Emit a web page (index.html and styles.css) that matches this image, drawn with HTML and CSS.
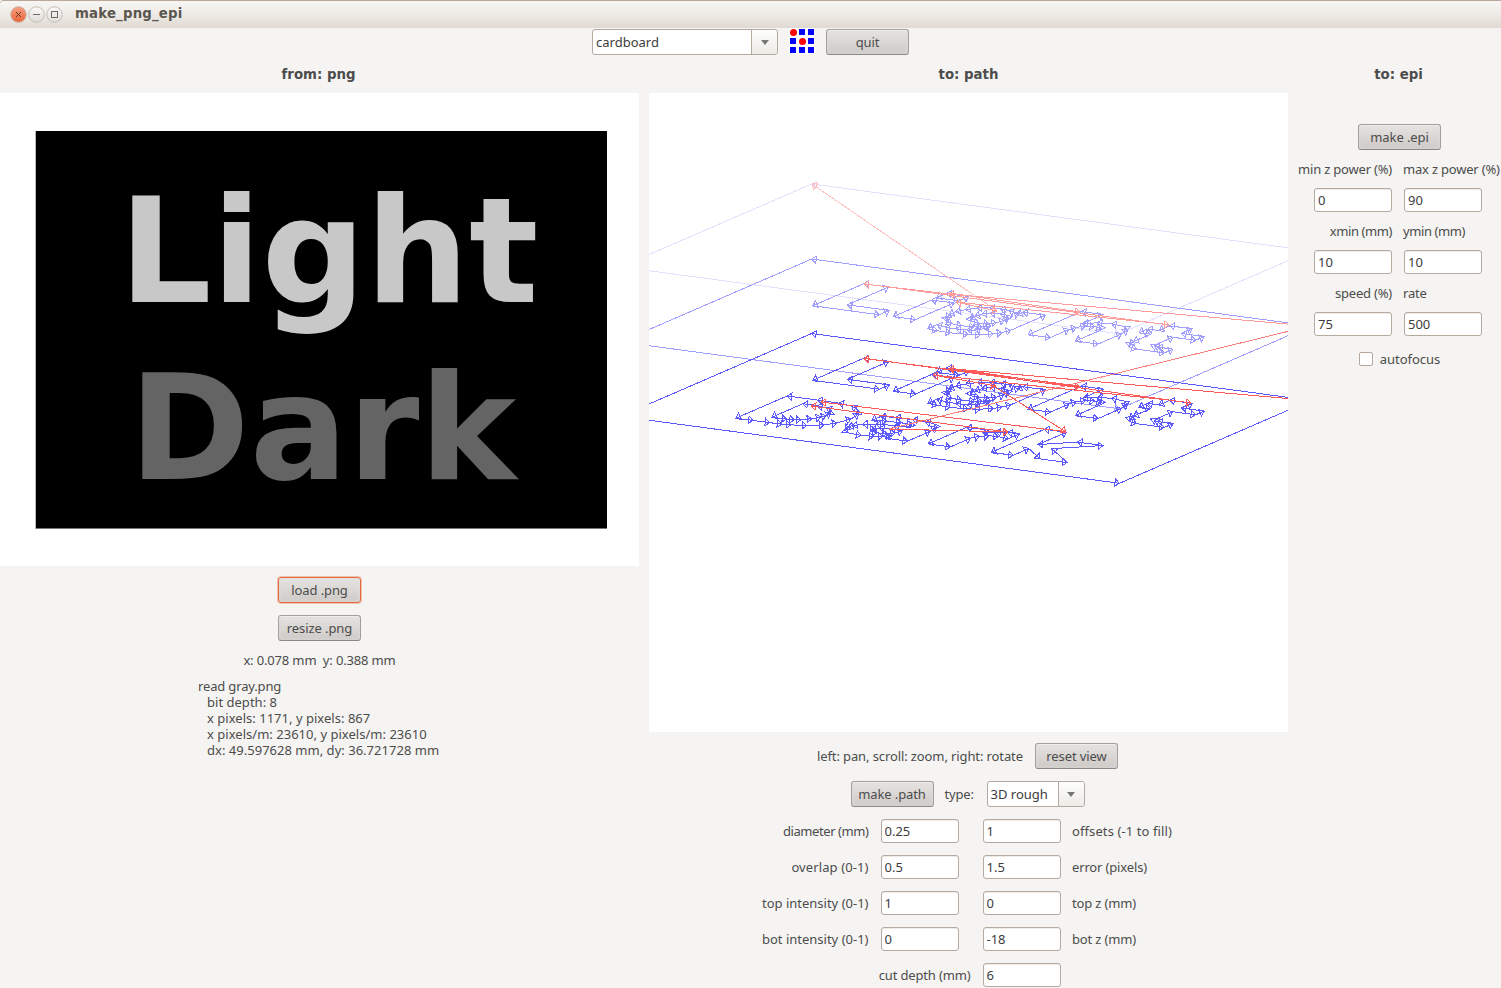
FILE: index.html
```html
<!DOCTYPE html>
<html lang="en">
<head>
<meta charset="utf-8">
<title>make_png_epi</title>
<link rel="stylesheet" href="styles.css">
</head>
<body>
<header class="titlebar">
  <svg class="winbtns" width="56" height="20" viewBox="0 0 56 20">
    <defs>
      <linearGradient id="close" x1="0" y1="0" x2="0" y2="1"><stop offset="0" stop-color="#f6a285"/><stop offset="1" stop-color="#ea6336"/></linearGradient>
      <linearGradient id="plain" x1="0" y1="0" x2="0" y2="1"><stop offset="0" stop-color="#fbfaf9"/><stop offset="1" stop-color="#dfdcd8"/></linearGradient>
    </defs>
    <circle cx="10.5" cy="10.5" r="7.7" fill="url(#close)" stroke="#c9a79a"/>
    <circle cx="28.5" cy="10.5" r="7.7" fill="url(#plain)" stroke="#c2bdb6"/>
    <circle cx="46.5" cy="10.5" r="7.7" fill="url(#plain)" stroke="#c2bdb6"/>
    <path d="M8 8l5 5M13 8l-5 5" stroke="#6b3a28" fill="none"/>
    <path d="M25 10.5h7" stroke="#6d6a64" fill="none"/>
    <rect x="43.5" y="7.5" width="6" height="6" stroke="#6d6a64" fill="none"/>
  </svg>
  <span class="title">make_png_epi</span>
</header>
<div class="toolbar">
  <div class="combo wide"><span class="combo-text">cardboard</span><span class="combo-arrow"><i></i></span></div>
  <svg class="logo" width="26" height="26" viewBox="0 0 26 26">
    <rect width="26" height="26" fill="#fff"/>
    <g fill="#00f"><rect x="10" y="1" width="6" height="6"/><rect x="19" y="1" width="6" height="6"/><rect x="1" y="10" width="6" height="6"/><rect x="19" y="10" width="6" height="6"/><rect x="1" y="19" width="6" height="6"/><rect x="10" y="19" width="6" height="6"/><rect x="19" y="19" width="6" height="6"/></g>
    <g fill="#f00"><circle cx="4.5" cy="4.5" r="3.5"/><circle cx="13.5" cy="13.5" r="3.5"/></g>
  </svg>
  <button class="btn">quit</button>
</div>
<main class="columns">
  <section class="col">
    <h2 class="head from">from: png</h2>
    <svg class="view" width="639" height="473" viewBox="0 93 639 473">
      <rect x="35.5" y="131" width="571.500" height="398" fill="#777"/>
      <rect x="36" y="131" width="571" height="397" fill="#000"/>
      <text class="pic" x="119" y="302" fill="#c8c8c8">Light</text>
      <text class="pic" x="129" y="478.500" fill="#646464">Dark</text>
    </svg>
    <button class="btn focus">load .png</button>
    <button class="btn second">resize .png</button>
    <div class="size">x: 0.078 mm&nbsp; y: 0.388 mm</div>
    <div class="info">
      <div>read gray.png</div>
      <div class="sub">bit depth: 8</div>
      <div class="sub">x pixels: 1171, y pixels: 867</div>
      <div class="sub">x pixels/m: 23610, y pixels/m: 23610</div>
      <div class="sub">dx: 49.597628 mm, dy: 36.721728 mm</div>
    </div>
  </section>
  <section class="col">
    <h2 class="head">to: path</h2>
    <svg class="view" id="path" width="639" height="639" viewBox="649 93 639 639" shape-rendering="crispEdges"></svg>
    <div class="controls">
      <div class="row view-row"><span class="hint">left: pan, scroll: zoom, right: rotate</span><button class="btn">reset view</button></div>
      <div class="row type-row"><button class="btn">make .path</button><span class="type">type:</span><div class="combo small"><span class="combo-text">3D rough</span><span class="combo-arrow"><i></i></span></div></div>
      <div class="fields">
        <div class="field"><label class="tight">diameter (mm)</label><input value="0.25"><input class="b" value="1"><span class="loose">offsets (-1 to fill)</span></div>
        <div class="field"><label class="loose">overlap (0-1)</label><input value="0.5"><input class="b" value="1.5"><span>error (pixels)</span></div>
        <div class="field"><label class="even">top intensity (0-1)</label><input value="1"><input class="b" value="0"><span>top z (mm)</span></div>
        <div class="field"><label class="even">bot intensity (0-1)</label><input value="0"><input class="b" value="-18"><span>bot z (mm)</span></div>
        <div class="field"><label class="long">cut depth (mm)</label><input value="6"></div>
      </div>
    </div>
  </section>
  <section class="col">
    <h2 class="head epi">to: epi</h2>
    <button class="btn make-epi">make .epi</button>
    <div class="pairs">
      <div class="pair"><label>min z power (%)</label><input value="0"></div>
      <div class="pair"><label>max z power (%)</label><input value="90"></div>
      <div class="pair"><label class="tight">xmin (mm)</label><input value="10"></div>
      <div class="pair"><label class="tight">ymin (mm)</label><input value="10"></div>
      <div class="pair"><label>speed (%)</label><input value="75"></div>
      <div class="pair"><label>rate</label><input value="500"></div>
    </div>
    <div class="check"><i></i><span class="even">autofocus</span></div>
  </section>
</main>
<script src="path.js"></script>
</body>
</html>
```
FILE: styles.css
```css
* { box-sizing: border-box; }
body { margin: 0; width: 1501px; height: 988px; overflow: hidden; background: #f5f4f2; color: #4c4c4c; font: 13px/16px "Noto Sans", sans-serif; letter-spacing: -0.15px; }
.titlebar { height: 28px; display: flex; align-items: flex-start; background: linear-gradient(#f8f6f4, #efece8 45%, #dfd9d1); border-top: 1px solid #b8a89c; padding-left: 8px; border-top-left-radius: 4px; }
.winbtns { margin-top: 3px; }
.title { margin: 4px 0 0 11px; font: bold 13.330px/17px "DejaVu Sans", sans-serif; color: #5b574f; letter-spacing: 0.17px; white-space: nowrap; }
.toolbar { height: 28px; display: flex; justify-content: center; gap: 11px; padding-top: 1px; }
.logo { margin-top: -1px; }
.btn { width: 83px; height: 26px; padding: 0; border: 1px solid #a39f9a; border-bottom-color: #8d8883; border-radius: 3px; background: linear-gradient(#e6e4e2, #cdc9c6); box-shadow: inset 0 1px #efeeec, inset 0 0 5px #dedbd8; color: #4c4c4c; font: inherit; letter-spacing: -0.1px; white-space: nowrap; }
.btn.focus { border-color: #e2693d; box-shadow: 0 0 0 1px #f3c2ae, inset 0 0 5px #e2dfdc; }
.combo { display: flex; height: 26px; border: 1px solid #b5aa9f; border-radius: 3px; background: #fff; color: #3c3c3c; }
.wide { width: 186px; }
.small { width: 98px; margin-left: 12px; }
.combo-text { flex: 1; padding: 4px 0 0 3px; white-space: nowrap; letter-spacing: 0; }
.combo-arrow { width: 26px; border-left: 1px solid #b5aa9f; background: linear-gradient(#fdfdfc, #edebe8); display: flex; align-items: center; justify-content: center; border-radius: 0 3px 3px 0; }
.combo-arrow i { border: 4px solid transparent; border-top: 5px solid #777; border-bottom: 0; }
.columns { display: grid; grid-template-columns: 639px 639px 203px; column-gap: 10px; }
.col { display: flex; flex-direction: column; align-items: center; }
.head { margin: 0; height: 37px; padding-top: 10px; font: bold 13.330px/18px "DejaVu Sans", sans-serif; letter-spacing: 0; }
.from, .epi { position: relative; left: -1px; }
.view { display: block; background: #fff; margin-bottom: 11px; flex: none; }
.pic { font: bold 145.400px "DejaVu Sans", sans-serif; letter-spacing: 0; }
.second { margin-top: 12px; }
.size { margin-top: 11px; white-space: nowrap; }
.info { width: 243px; margin-top: 10px; white-space: nowrap; }
.sub { padding-left: 9px; letter-spacing: 0.02px; }
.controls { display: flex; flex-direction: column; align-items: center; margin-right: 2px; }
.row { display: flex; align-items: center; height: 26px; white-space: nowrap; }
.hint { width: 206px; margin-right: 12px; letter-spacing: -0.11px; }
.type-row { margin-top: 12px; }
.type { width: 30px; margin-left: 11px; }
.fields { width: 412px; margin-top: 12px; display: flex; flex-direction: column; gap: 12px; }
.field { display: flex; align-items: center; height: 24px; white-space: nowrap; }
.field label { width: 107px; margin-right: 12px; display: flex; justify-content: flex-end; }
.field .long { width: 209px; }
.field .b { margin-left: 24px; }
.field span { margin-left: 11.5px; }
.tight { letter-spacing: -0.42px; }
.even { letter-spacing: 0; }
.loose { letter-spacing: 0.1px; }
input { width: 78px; height: 24px; flex: none; border: 1px solid #b5aa9f; border-radius: 3px; padding: 0 0 0 3px; margin: 0; background: #fff; color: #3c3c3c; font: inherit; letter-spacing: 0; box-shadow: inset 0 1px #eeebe8; }
.make-epi { margin-top: 31px; }
.pairs { display: grid; grid-template-columns: 94px 98px; column-gap: 11px; width: 203px; margin-top: 11px; row-gap: 11px; letter-spacing: -0.2px; }
.pair { display: flex; flex-direction: column; gap: 11px; height: 51px; white-space: nowrap; }
.pair:nth-child(odd) { align-items: flex-end; }
.pair:nth-child(even) input { margin-left: 1px; }
.check { display: flex; align-items: center; gap: 7px; margin-top: 15px; }
.check i { width: 14px; height: 14px; border: 1px solid #b5a99e; border-radius: 2px; background: #fff; }
```
FILE: path.js
```js
// Tool path preview: contours in image space, projected onto stacked depth layers.
const svg = document.getElementById('path');
const NS = 'http://www.w3.org/2000/svg';
const W = 1492, H = 1193;
const U = [499, 66.9], V = [-191.2, 82.9];
const project = (x, y, top) => [
  811.7 + (x - 16) / W * U[0] + (y - 33) / H * V[0],
  top + (x - 16) / W * U[1] + (y - 33) / H * V[1]
];

function add(d, color) {
  const p = document.createElementNS(NS, 'path');
  p.setAttribute('d', d);
  p.setAttribute('stroke', color);
  p.setAttribute('fill', 'none');
  svg.appendChild(p);
}

function segment(a, b, color) {
  const dx = b[0] - a[0], dy = b[1] - a[1], n = Math.hypot(dx, dy) || 1;
  const ux = dx / n, uy = dy / n, len = 4.5, half = 3.6;
  const bx = b[0] - ux * len, by = b[1] - uy * len;
  add(`M${a}L${b}M${b}L${[bx - uy * half, by + ux * half]}L${[bx + uy * half, by - ux * half]}Z`, color);
}

function contour(pts, top, color) {
  const q = [];
  for (let i = 0; i < pts.length; i += 2) q.push(project(pts[i], pts[i + 1], top));
  q.forEach((p, i) => segment(p, q[(i + 1) % q.length], color));
}

const frame = [16, 33, 16, 1226, 1508, 1226, 1508, 33];
const upper = [
  [265,228,265,546,464,546,464,484,339,484,339,228],
  [506,307,506,546,572,546,572,307],
  [506,214,506,276,572,276,572,214],
  [846,307,779,307,779,342,760,322,738,308,710,303,680,308,652,328,634,362,623,400,622,440,634,485,652,517,676,538,710,546,745,540,762,527,779,506,776,548,762,574,745,585,715,590,680,585,648,570,648,627,680,636,722,641,770,632,800,616,825,588,838,562,846,523],
  [735,357,709,365,695,388,691,423,696,462,710,484,735,490,760,482,774,462,778,423,773,385,758,364],
  [909,214,909,546,975,546,975,430,980,395,995,368,1018,359,1042,368,1051,392,1051,546,1118,546,1118,400,1110,345,1085,315,1042,303,1005,314,975,342,975,214],
  [1186,240,1186,307,1152,307,1152,361,1186,361,1186,466,1192,505,1205,531,1232,545,1316,546,1316,492,1270,491,1256,483,1253,465,1253,361,1321,361,1321,307,1253,307,1253,240]
];
const lower = [
  [289,756,289,1075,340,1075,390,1075,425,1073,450,1068,490,1052,525,1018,545,980,556,915,548,850,525,805,490,773,445,759,380,756],
  [366,818,366,1012,410,1011,430,1005,445,996,465,970,478,940,481,915,476,875,462,845,440,826,410,819],
  [611,842,611,899,650,886,690,882,725,890,735,920,690,922,640,935,610,955,595,985,591,1005,600,1045,620,1070,665,1080,700,1073,720,1058,735,1040,735,1075,802,1075,802,935,795,880,775,848,740,834,700,830,650,833],
  [735,967,700,968,670,975,659,1000,665,1020,690,1029,715,1022,730,1000],
  [864,835,864,1075,930,1075,930,950,940,915,960,895,985,891,1019,900,1019,831,985,832,955,845,930,873,930,835],
  [1052,743,1052,1075,1118,1075,1118,978,1198,1075,1279,1075,1171,945,1271,835,1195,835,1118,920,1118,743]
];

contour(frame, 184, '#e2e0ff');
for (const c of [frame, ...upper]) contour(c, 259, '#a09eff');
for (const c of [frame, ...upper, ...lower]) contour(c, 333.5, '#5c5aff');

// Rapid moves between contours.
const moves = [
  [997,311,812,184,'#ffc0c0'],
  [1310,326,949,294,'#ff9c9c'],
  [866,284,1169,325,'#ff9c9c'],
  [949,293,1080,312,'#ff9c9c'],
  [1168,324.5,956,302,'#ff9c9c'],
  [956,302,997,311,'#ff9c9c'],
  [949,294,864,284,'#ff9c9c'],
  [889,429,1310,326,'#ff8080'],
  [1310,400.500,949,368.500,'#ff5a5a'],
  [866,358.500,1191,403,'#ff5a5a'],
  [1079,386,864,358.500,'#ff5a5a'],
  [949,368,1080,387,'#ff5a5a'],
  [1168,400,933,375,'#ff5a5a'],
  [933,375,996,386,'#ff5a5a'],
  [992,385,1066,432,'#ff5a5a'],
  [1065,431.500,821,402,'#ff5a5a'],
  [1008,432,811,406,'#ff5a5a'],
  [889,429,1008,432,'#ff5a5a']
];
for (const [x1, y1, x2, y2, c] of moves) segment([x1, y1], [x2, y2], c);
```
